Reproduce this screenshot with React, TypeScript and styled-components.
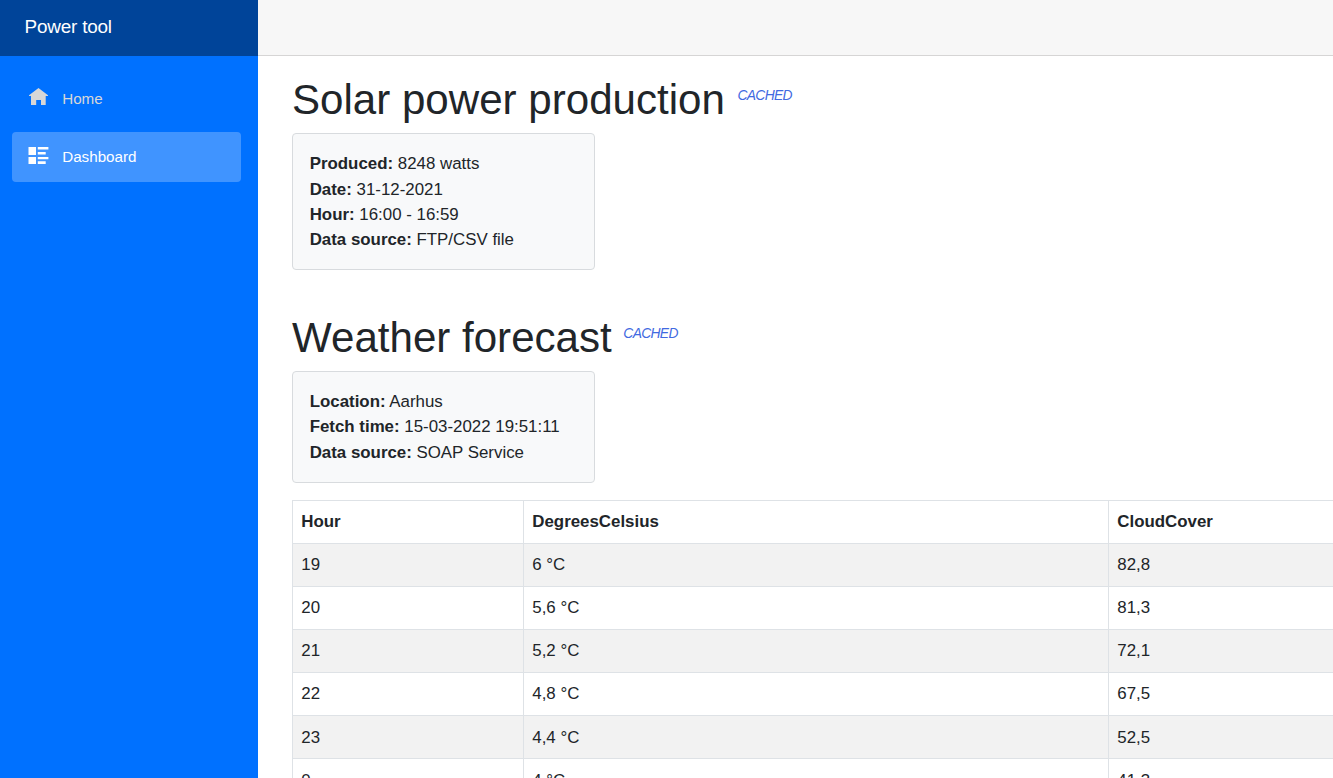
import React from "react";
import styled, { createGlobalStyle } from "styled-components";

const GlobalStyle = createGlobalStyle`
  *, *::before, *::after { box-sizing: border-box; }
  html, body { margin: 0; height: 100%; overflow: hidden; }
  body {
    font-family: "Liberation Sans", Arial, sans-serif;
    font-size: 16.86px;
    line-height: 25.3px;
    color: #212529;
    background: #fff;
  }
`;

const Page = styled.div`
  display: flex;
  height: 100vh;
  overflow: hidden;
`;

const Sidebar = styled.aside`
  flex: 0 0 258px;
  background: #0071ff;
`;

const Brand = styled.div`
  height: 56px;
  padding: 1px 0 3px 24.6px;
  display: flex;
  align-items: center;
  background: #004499;
  color: #fff;
  font-size: 18.9px;
  letter-spacing: -0.2px;
`;

const Nav = styled.nav`
  display: flex;
  flex-direction: column;
  gap: 8px;
  padding: 18px 17px 0 12px;
`;

const NavLink = styled.a<{ $active?: boolean }>`
  display: flex;
  align-items: center;
  height: 50px;
  padding-left: 16px;
  border-radius: 4px;
  font-size: 15.2px;
  color: ${(p) => (p.$active ? "#fff" : "#d7d7d7")};
  background: ${(p) => (p.$active ? "#4094ff" : "transparent")};
`;

const NavIcon = styled.svg`
  width: 21px;
  height: 18px;
  margin: -4px 13.2px 0 0;
  fill: currentColor;
`;

const Main = styled.main`
  flex: 1;
  min-width: 0;
  overflow: hidden;
`;

const TopRow = styled.header`
  height: 56px;
  background: #f7f7f7;
  border-bottom: 1px solid #d6d5d5;
`;

const Content = styled.article`
  padding: 19px 0 0 34px;
`;

const Section = styled.section`
  margin-bottom: 43px;
`;

const Title = styled.h1`
  display: flex;
  align-items: flex-start;
  height: 50px;
  margin: 0 0 8px;
  font-size: 42.1px;
  font-weight: 400;
  line-height: 50px;
`;

const Cached = styled.em<{ $gap: number }>`
  margin: 8px 0 0 ${(p) => p.$gap}px;
  font-size: 13.8px;
  line-height: 26px;
  letter-spacing: -0.65px;
  color: #4169e1;
`;

const Card = styled.div<{ $shift: number }>`
  width: 303px;
  padding: ${(p) => 17 + p.$shift}px 17px ${(p) => 16.8 - p.$shift}px 16.7px;
  border: 1px solid #d8dbde;
  border-radius: 4px;
  background: #f8f9fa;
`;

const Row = styled.div`
  white-space: nowrap;
`;

const Table = styled.table`
  width: 1276px;
  margin-top: 17px;
  table-layout: fixed;
  border-collapse: collapse;

  th, td {
    height: 43px;
    padding: 0 8.3px 1px;
    border: 1px solid #dee2e6;
    text-align: left;
    vertical-align: middle;
  }

  tbody tr:nth-of-type(odd) { background: #f2f2f2; }
  tbody tr:nth-of-type(n + 5) td { padding: 1px 8.3px 0; }
`;

const forecast = [
  ["19", "6 °C", "82,8"],
  ["20", "5,6 °C", "81,3"],
  ["21", "5,2 °C", "72,1"],
  ["22", "4,8 °C", "67,5"],
  ["23", "4,4 °C", "52,5"],
  ["0", "4 °C", "41,3"],
];

function Details({ items, shift = 0 }: { items: [string, string][]; shift?: number }) {
  return (
    <Card $shift={shift}>
      {items.map(([label, value]) => (
        <Row key={label}>
          <strong>{label}:</strong> {value}
        </Row>
      ))}
    </Card>
  );
}

export default function App() {
  return (
    <>
      <GlobalStyle />
      <Page>
        <Sidebar>
          <Brand>Power tool</Brand>
          <Nav>
            <NavLink>
              <NavIcon viewBox="0 0 21 18">
                <path d="M10.5 0 20 7.2v.8h-2.3v9h-4.7v-5H8.2v5H3V8H1v-.8Z" />
              </NavIcon>
              Home
            </NavLink>
            <NavLink $active>
              <NavIcon viewBox="0 0 21 18">
                <path d="M.5 1H8v8H.5ZM.5 11H8v7H.5ZM9.8 1h10.6v2.5H9.8ZM9.8 6h7.9v2.6H9.8ZM9.8 11h10.6v2.2H9.8ZM9.8 15.2h7.9V18H9.8Z" />
              </NavIcon>
              Dashboard
            </NavLink>
          </Nav>
        </Sidebar>
        <Main>
          <TopRow />
          <Content>
            <Section>
              <Title>
                Solar power production<Cached $gap={12.6}>CACHED</Cached>
              </Title>
              <Details
                shift={0.3}
                items={[
                  ["Produced", "8248 watts"],
                  ["Date", "31-12-2021"],
                  ["Hour", "16:00 - 16:59"],
                  ["Data source", "FTP/CSV file"],
                ]}
              />
            </Section>
            <Section>
              <Title>
                Weather forecast<Cached $gap={11.6}>CACHED</Cached>
              </Title>
              <Details
                items={[
                  ["Location", "Aarhus"],
                  ["Fetch time", "15-03-2022 19:51:11"],
                  ["Data source", "SOAP Service"],
                ]}
              />
              <Table>
                <colgroup>
                  <col style={{ width: 231 }} />
                  <col style={{ width: 585 }} />
                  <col />
                </colgroup>
                <thead>
                  <tr>
                    <th>Hour</th>
                    <th>DegreesCelsius</th>
                    <th>CloudCover</th>
                  </tr>
                </thead>
                <tbody>
                  {forecast.map((cells) => (
                    <tr key={cells[0]}>
                      {cells.map((cell) => (
                        <td key={cell}>{cell}</td>
                      ))}
                    </tr>
                  ))}
                </tbody>
              </Table>
            </Section>
          </Content>
        </Main>
      </Page>
    </>
  );
}
